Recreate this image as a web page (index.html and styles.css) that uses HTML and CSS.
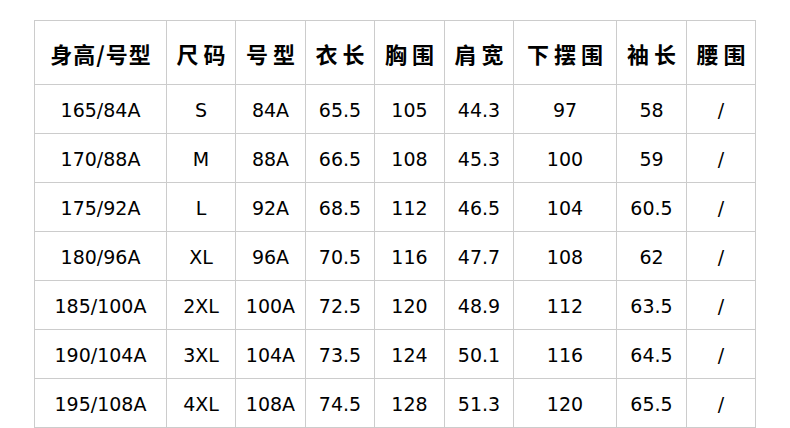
FILE: index.html
```html
<!DOCTYPE html>
<html lang="zh">
<head>
<meta charset="utf-8">
<link rel="stylesheet" href="styles.css">
</head>
<body>
<table class="size-table">
  <colgroup>
    <col class="c1"><col class="c2"><col class="c3"><col class="c4"><col class="c5"><col class="c6"><col class="c7"><col class="c8"><col class="c9">
  </colgroup>
  <thead>
    <tr><th class="tight">身高/号型</th><th>尺码</th><th>号型</th><th>衣长</th><th>胸围</th><th>肩宽</th><th>下摆围</th><th>袖长</th><th>腰围</th></tr>
  </thead>
  <tbody>
    <tr><td>165/84A</td><td>S</td><td>84A</td><td>65.5</td><td>105</td><td>44.3</td><td>97</td><td>58</td><td>/</td></tr>
    <tr><td>170/88A</td><td>M</td><td>88A</td><td>66.5</td><td>108</td><td>45.3</td><td>100</td><td>59</td><td>/</td></tr>
    <tr><td>175/92A</td><td>L</td><td>92A</td><td>68.5</td><td>112</td><td>46.5</td><td>104</td><td>60.5</td><td>/</td></tr>
    <tr><td>180/96A</td><td>XL</td><td>96A</td><td>70.5</td><td>116</td><td>47.7</td><td>108</td><td>62</td><td>/</td></tr>
    <tr><td>185/100A</td><td>2XL</td><td>100A</td><td>72.5</td><td>120</td><td>48.9</td><td>112</td><td>63.5</td><td>/</td></tr>
    <tr><td>190/104A</td><td>3XL</td><td>104A</td><td>73.5</td><td>124</td><td>50.1</td><td>116</td><td>64.5</td><td>/</td></tr>
    <tr><td>195/108A</td><td>4XL</td><td>108A</td><td>74.5</td><td>128</td><td>51.3</td><td>120</td><td>65.5</td><td>/</td></tr>
  </tbody>
</table>
</body>
</html>
```

FILE: styles.css
```css
html, body {
  margin: 0;
  padding: 0;
  background: #ffffff;
}
body {
  padding: 20px 0 0 34px;
}
.size-table {
  table-layout: fixed;
  border-collapse: separate;
  border-spacing: 1px;
  background: #cccccc;
  width: 722px;
}
.c1 { width: 131px; }
.c2 { width: 68px; }
.c3 { width: 69px; }
.c4 { width: 68px; }
.c5 { width: 69px; }
.c6 { width: 68px; }
.c7 { width: 102px; }
.c8 { width: 69px; }
.c9 { width: 68px; }
.size-table th,
.size-table td {
  background: #ffffff;
  padding: 0;
  text-align: center;
  vertical-align: middle;
  color: #000000;
  white-space: nowrap;
  overflow: hidden;
}
.size-table th {
  height: 63px;
  font-family: "Noto Sans CJK SC", "DejaVu Sans", sans-serif;
  font-weight: 700;
  font-size: 22px;
  letter-spacing: 5px;
  text-indent: 5px;
  padding-top: 1px;
  box-sizing: border-box;
}
.size-table th.tight {
  letter-spacing: 1px;
  text-indent: 1px;
}
.size-table td {
  height: 48px;
  font-family: "DejaVu Sans", sans-serif;
  font-size: 19px;
  padding-top: 2px;
  box-sizing: border-box;
}
```
